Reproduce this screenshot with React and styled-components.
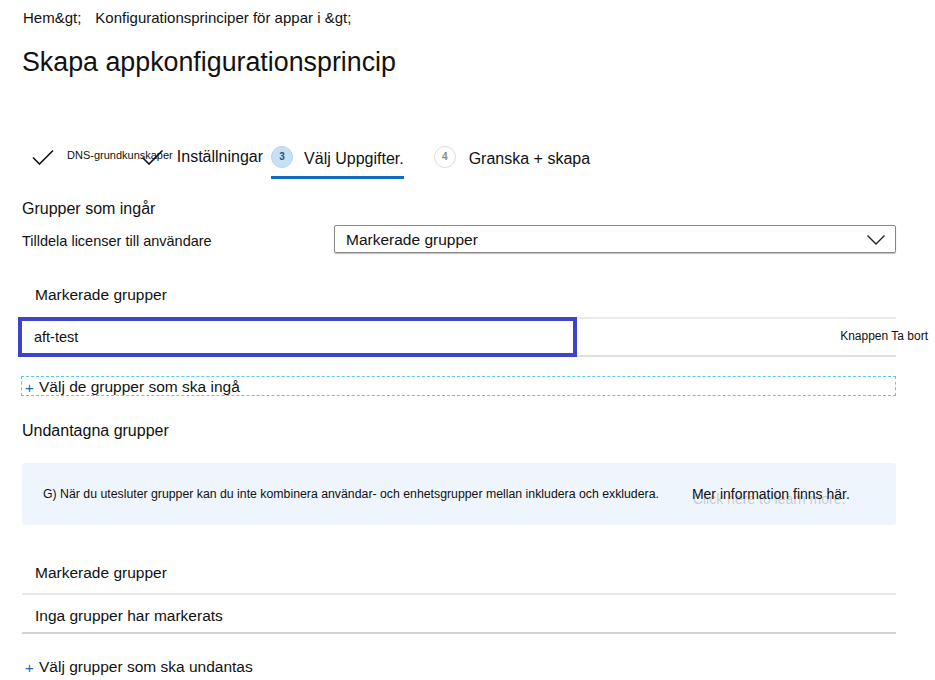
import React from "react";
import styled, { createGlobalStyle } from "styled-components";

const Global = createGlobalStyle`
  html, body { margin: 0; padding: 0; background: #fff; }
  body { font-family: "Liberation Sans", Arial, sans-serif; color: #111; }
  * { box-sizing: border-box; }
`;

const Page = styled.div`
  width: 935px;
  height: 680px;
  overflow: hidden;
  padding: 10px 39px 0 22px;
`;

const Breadcrumb = styled.nav`
  display: flex;
  gap: 14px;
  font-size: 15px;
  line-height: 16px;
  padding-left: 1px;
`;

const Title = styled.h1`
  margin: 20px 0 0;
  font-size: 26.8px;
  line-height: 32px;
  font-weight: 400;
`;

const StepRow = styled.div`
  margin-top: 62px;
  display: flex;
  align-items: stretch;
  padding-left: 10px;
  height: 39px;
`;

const Step = styled.div`
  display: flex;
  align-items: center;
  gap: ${(p) => p.$gap || 12}px;
  margin-left: ${(p) => p.$ml || 0}px;
  padding-bottom: 3px;
  border-bottom: 3px solid ${(p) => (p.$active ? "#0f6cbd" : "transparent")};
  font-size: 16px;
`;

const StepText = styled.span`
  padding-top: ${(p) => p.$pt || 0}px;
`;

const SmallLabel = styled.span`
  font-size: 11px;
  align-self: center;
  margin-top: -3px;
`;

const Circle = styled.span`
  width: 22px;
  height: 22px;
  border-radius: 50%;
  display: inline-flex;
  align-items: center;
  justify-content: center;
  font-size: 10px;
  font-weight: 700;
  background: ${(p) => (p.$active ? "#c7e0f4" : "#fff")};
  border: 1px solid ${(p) => (p.$active ? "#b3d4ef" : "#dcdcdc")};
  color: ${(p) => (p.$active ? "#1f4f8f" : "#8a8886")};
`;

const SectionHeading = styled.div`
  margin-top: ${(p) => p.$mt || 0}px;
  padding-left: ${(p) => p.$pl || 0}px;
  font-size: ${(p) => p.$fs || 16}px;
  line-height: 20px;
`;

const FieldRow = styled.div`
  margin-top: 6px;
  display: flex;
  align-items: center;
  height: 28px;
`;

const FieldLabel = styled.span`
  width: 312px;
  font-size: 14.5px;
  padding-top: 4px;
`;

const Dropdown = styled.div`
  flex: 1;
  height: 28px;
  border: 1px solid #8a8886;
  border-radius: 2px;
  box-shadow: 0 1px 1px rgba(0, 0, 0, 0.25);
  display: flex;
  align-items: center;
  justify-content: space-between;
  padding: 2px 9px 0 11px;
  font-size: 15.5px;
`;

const List = styled.div`
  margin-top: 12px;
  display: flex;
  align-items: center;
  height: 40px;
  border-top: 2px solid #ebebeb;
  border-bottom: 2px solid #e0e0e0;
`;

const FocusCell = styled.div`
  align-self: stretch;
  margin: -2px 0 -2px -4px;
  width: 559px;
  border: 4px solid #3d44c9;
  display: flex;
  align-items: center;
  padding-left: 12px;
  font-size: 14.5px;
`;

const RemoveLabel = styled.span`
  margin-left: auto;
  margin-right: -32px;
  font-size: 12px;
  padding-bottom: 3px;
`;

const AddButton = styled.div`
  margin-top: ${(p) => p.$mt || 0}px;
  margin-left: -1px;
  height: 20px;
  display: flex;
  align-items: center;
  gap: 6px;
  padding: 2px 0 0 3px;
  font-size: 15.5px;
  border: 1px dashed ${(p) => (p.$dashed ? "#5cc6f2" : "transparent")};
`;

const Plus = styled.span`
  color: #0f6cbd;
  font-size: 15px;
  width: 8px;
`;

const InfoBox = styled.div`
  margin-top: 22px;
  height: 62px;
  background: #eff5fd;
  border-radius: 3px;
  display: flex;
  align-items: center;
  padding-left: 21px;
  gap: 33px;
`;

const InfoText = styled.span`
  font-size: 12.3px;
`;

const LinkWrap = styled.span`
  position: relative;
  font-size: 14px;
  color: #111;
`;

const Ghost = styled.span`
  position: absolute;
  left: 1px;
  top: 5px;
  white-space: nowrap;
  color: rgba(120, 120, 120, 0.35);
  z-index: 0;
`;

const LinkText = styled.span`
  position: relative;
  z-index: 1;
`;

const HeaderRow = styled.div`
  margin-top: 38px;
  padding: 0 0 10px 13px;
  font-size: 15.5px;
  line-height: 20px;
  border-bottom: 2px solid #e8e8e8;
`;

const EmptyRow = styled.div`
  padding: 11px 0 6px 13px;
  font-size: 15.5px;
  line-height: 20px;
  border-bottom: 2px solid #d2d2d2;
`;

const Check = ({ w = 22 }) => (
  <svg width={w} height="16" viewBox="0 0 22 16" fill="none">
    <path d="M1 8.5 L7.5 15 L21 1.5" stroke="#111" strokeWidth="1.6" />
  </svg>
);

const Chevron = () => (
  <svg width="20" height="12" viewBox="0 0 20 12" fill="none">
    <path d="M1.5 1.5 L10 10 L18.5 1.5" stroke="#222" strokeWidth="1.4" />
  </svg>
);

export default function App() {
  return (
    <>
      <Global />
      <Page>
        <Breadcrumb>
          <span>Hem&amp;gt;</span>
          <span>Konfigurationsprinciper för appar i &amp;gt;</span>
        </Breadcrumb>
        <Title>Skapa appkonfigurationsprincip</Title>

        <StepRow>
          <Step $gap={13}>
            <Check />
            <SmallLabel>DNS-grundkunskaper</SmallLabel>
          </Step>
          <Step $ml={-33} $gap={12}>
            <Check w={25} />
            <StepText>Inställningar</StepText>
          </Step>
          <Step $ml={8} $gap={11} $active>
            <Circle $active>3</Circle>
            <StepText $pt={4}>Välj Uppgifter.</StepText>
          </Step>
          <Step $ml={30} $gap={13}>
            <Circle>4</Circle>
            <StepText $pt={4}>Granska + skapa</StepText>
          </Step>
        </StepRow>

        <SectionHeading $mt={20}>Grupper som ingår</SectionHeading>
        <FieldRow>
          <FieldLabel>Tilldela licenser till användare</FieldLabel>
          <Dropdown>
            <span>Markerade grupper</span>
            <Chevron />
          </Dropdown>
        </FieldRow>

        <SectionHeading $mt={32} $pl={13} $fs={15.5}>Markerade grupper</SectionHeading>
        <List>
          <FocusCell>aft-test</FocusCell>
          <RemoveLabel>Knappen Ta bort</RemoveLabel>
        </List>

        <AddButton $mt={19} $dashed>
          <Plus>+</Plus>
          <span>Välj de grupper som ska ingå</span>
        </AddButton>

        <SectionHeading $mt={25}>Undantagna grupper</SectionHeading>

        <InfoBox>
          <InfoText>
            G) När du utesluter grupper kan du inte kombinera användar- och enhetsgrupper mellan inkludera och exkludera.
          </InfoText>
          <LinkWrap>
            <Ghost>Click here to learn more.</Ghost>
            <LinkText>Mer information finns här.</LinkText>
          </LinkWrap>
        </InfoBox>

        <HeaderRow>Markerade grupper</HeaderRow>
        <EmptyRow>Inga grupper har markerats</EmptyRow>

        <AddButton $mt={22}>
          <Plus>+</Plus>
          <span>Välj grupper som ska undantas</span>
        </AddButton>
      </Page>
    </>
  );
}
